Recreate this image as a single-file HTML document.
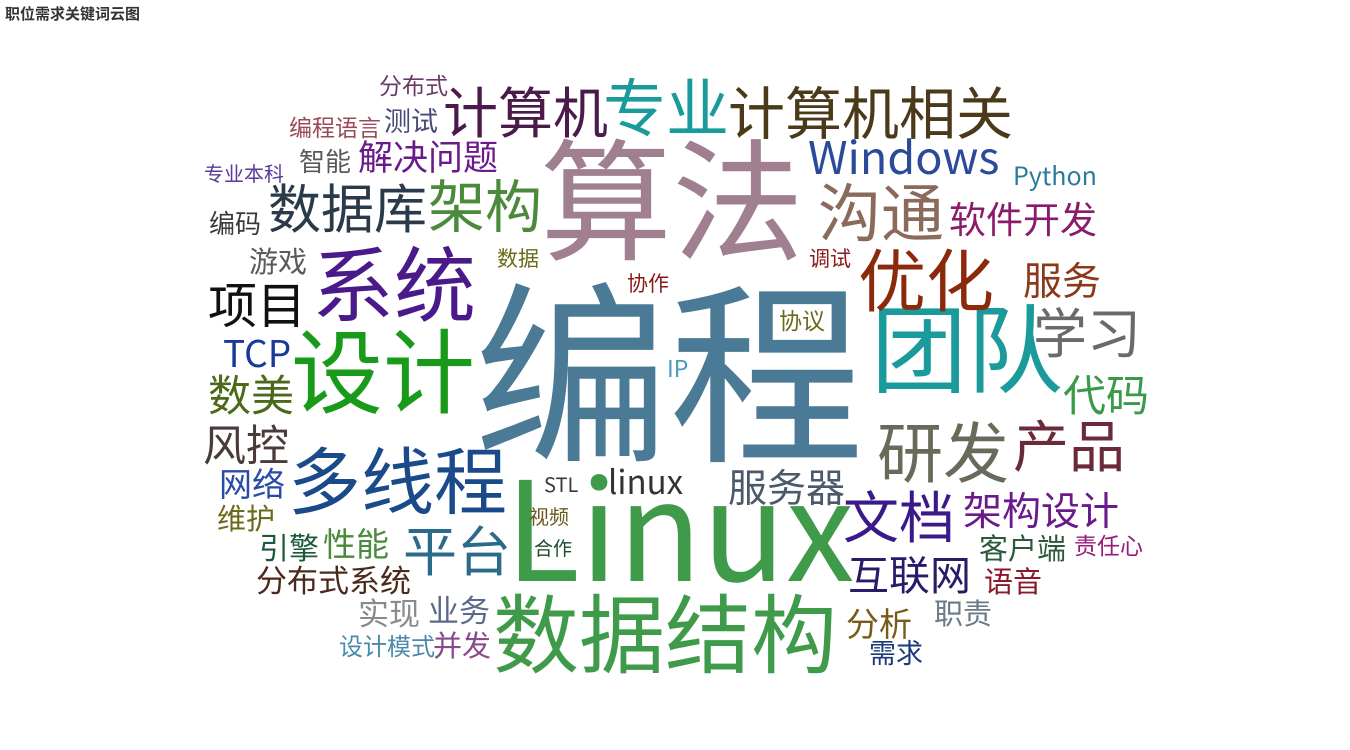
<!DOCTYPE html>
<html><head><meta charset="utf-8"><style>
html,body{margin:0;padding:0;background:#fff;width:1350px;height:750px;overflow:hidden;position:relative}
body{font-family:"Liberation Sans","Noto Sans CJK SC",sans-serif}
.t{position:absolute;left:5px;top:3px;font-size:15px;font-weight:bold;color:#333}
.w{position:absolute;white-space:nowrap;line-height:1;font-family:"Noto Sans CJK SC","Liberation Sans",sans-serif}
</style></head><body>
<div class="t">职位需求关键词云图</div>
<span class="w" style="left:474px;top:266px;font-size:195px;color:#4a7a95">编程</span>
<span class="w" style="left:540px;top:128px;font-size:132px;color:#a08090">算法</span>
<span class="w" style="left:505px;top:452px;font-size:138px;color:#3f9a4a">Linux</span>
<span class="w" style="left:291px;top:321px;font-size:92px;color:#1a9a1a">设计</span>
<span class="w" style="left:871px;top:296px;font-size:96px;color:#1a9a9a">团队</span>
<span class="w" style="left:312px;top:239px;font-size:82px;color:#4a1a8a">系统</span>
<span class="w" style="left:858px;top:243px;font-size:68px;color:#8b2a0a">优化</span>
<span class="w" style="left:493px;top:586px;font-size:86px;color:#3f9a4a">数据结构</span>
<span class="w" style="left:288px;top:441px;font-size:73px;color:#1a4a8a">多线程</span>
<span class="w" style="left:728px;top:82px;font-size:57px;color:#4a3a1a">计算机相关</span>
<span class="w" style="left:443px;top:82px;font-size:55px;color:#4a1a4a">计算机</span>
<span class="w" style="left:603px;top:73px;font-size:63px;color:#1a9a9a">专业</span>
<span class="w" style="left:808px;top:132px;font-size:45px;color:#2a4a9a">Windows</span>
<span class="w" style="left:818px;top:178px;font-size:63px;color:#8a6a5a">沟通</span>
<span class="w" style="left:428px;top:175px;font-size:57px;color:#4a8a3a">架构</span>
<span class="w" style="left:268px;top:180px;font-size:53px;color:#2a3a4a">数据库</span>
<span class="w" style="left:208px;top:278px;font-size:49px;color:#111">项目</span>
<span class="w" style="left:1033px;top:303px;font-size:54px;color:#6a6a6a">学习</span>
<span class="w" style="left:1023px;top:260px;font-size:39px;color:#8a3a1a">服务</span>
<span class="w" style="left:949px;top:199px;font-size:37px;color:#8a1a6a">软件开发</span>
<span class="w" style="left:1013px;top:163px;font-size:25px;color:#2a7a9a">Python</span>
<span class="w" style="left:358px;top:138px;font-size:35px;color:#6a1a8a">解决问题</span>
<span class="w" style="left:384px;top:106px;font-size:27px;color:#4a4a7a">测试</span>
<span class="w" style="left:379px;top:73px;font-size:23px;color:#6a3a6a">分布式</span>
<span class="w" style="left:289px;top:115px;font-size:23px;color:#9a4a5a">编程语言</span>
<span class="w" style="left:299px;top:148px;font-size:26px;color:#5a5a5a">智能</span>
<span class="w" style="left:204px;top:163px;font-size:20px;color:#5a3a9a">专业本科</span>
<span class="w" style="left:209px;top:210px;font-size:26px;color:#3a3a3a">编码</span>
<span class="w" style="left:249px;top:246px;font-size:29px;color:#5a5a5a">游戏</span>
<span class="w" style="left:497px;top:248px;font-size:21px;color:#6a6a1a">数据</span>
<span class="w" style="left:809px;top:248px;font-size:21px;color:#8a1a1a">调试</span>
<span class="w" style="left:627px;top:273px;font-size:21px;color:#8a1a1a">协作</span>
<span class="w" style="left:779px;top:308px;font-size:23px;color:#6a6a1a">协议</span>
<span class="w" style="left:667px;top:356px;font-size:23px;color:#4a9aba">IP</span>
<span class="w" style="left:223px;top:333px;font-size:37px;color:#1a3a9a">TCP</span>
<span class="w" style="left:208px;top:372px;font-size:43px;color:#4a6a1a">数美</span>
<span class="w" style="left:1063px;top:372px;font-size:43px;color:#3a9a4a">代码</span>
<span class="w" style="left:203px;top:422px;font-size:43px;color:#4a3a3a">风控</span>
<span class="w" style="left:877px;top:416px;font-size:66px;color:#6a6a5a">研发</span>
<span class="w" style="left:1013px;top:416px;font-size:56px;color:#6a2a3a">产品</span>
<span class="w" style="left:219px;top:466px;font-size:33px;color:#2a4aaa">网络</span>
<span class="w" style="left:217px;top:503px;font-size:29px;color:#6a6a1a">维护</span>
<span class="w" style="left:259px;top:531px;font-size:30px;color:#1a5a3a">引擎</span>
<span class="w" style="left:323px;top:526px;font-size:33px;color:#4a8a3a">性能</span>
<span class="w" style="left:403px;top:521px;font-size:54px;color:#2a6a8a">平台</span>
<span class="w" style="left:256px;top:563px;font-size:31px;color:#4a2a1a">分布式系统</span>
<span class="w" style="left:358px;top:596px;font-size:31px;color:#8a8a8a">实现</span>
<span class="w" style="left:428px;top:593px;font-size:31px;color:#5a6a8a">业务</span>
<span class="w" style="left:339px;top:633px;font-size:24px;color:#4a8aaa">设计模式</span>
<span class="w" style="left:433px;top:630px;font-size:29px;color:#8a4a8a">并发</span>
<span class="w" style="left:544px;top:474px;font-size:20px;color:#3a3a3a">STL</span>
<span class="w" style="left:608px;top:464px;font-size:33px;color:#333">linux</span>
<span class="w" style="left:728px;top:467px;font-size:39px;color:#4a5a6a">服务器</span>
<span class="w" style="left:529px;top:506px;font-size:20px;color:#6a5a1a">视频</span>
<span class="w" style="left:534px;top:538px;font-size:19px;color:#1a4a2a">合作</span>
<span class="w" style="left:843px;top:487px;font-size:56px;color:#3a1a8a">文档</span>
<span class="w" style="left:963px;top:490px;font-size:39px;color:#6a1a8a">架构设计</span>
<span class="w" style="left:848px;top:552px;font-size:41px;color:#2a1a6a">互联网</span>
<span class="w" style="left:979px;top:533px;font-size:29px;color:#2a5a3a">客户端</span>
<span class="w" style="left:1074px;top:533px;font-size:23px;color:#9a1a7a">责任心</span>
<span class="w" style="left:984px;top:566px;font-size:29px;color:#8a1a2a">语音</span>
<span class="w" style="left:846px;top:606px;font-size:33px;color:#7a5a1a">分析</span>
<span class="w" style="left:934px;top:598px;font-size:29px;color:#6a7a8a">职责</span>
<span class="w" style="left:869px;top:638px;font-size:27px;color:#1a3a7a">需求</span>
</body></html>
